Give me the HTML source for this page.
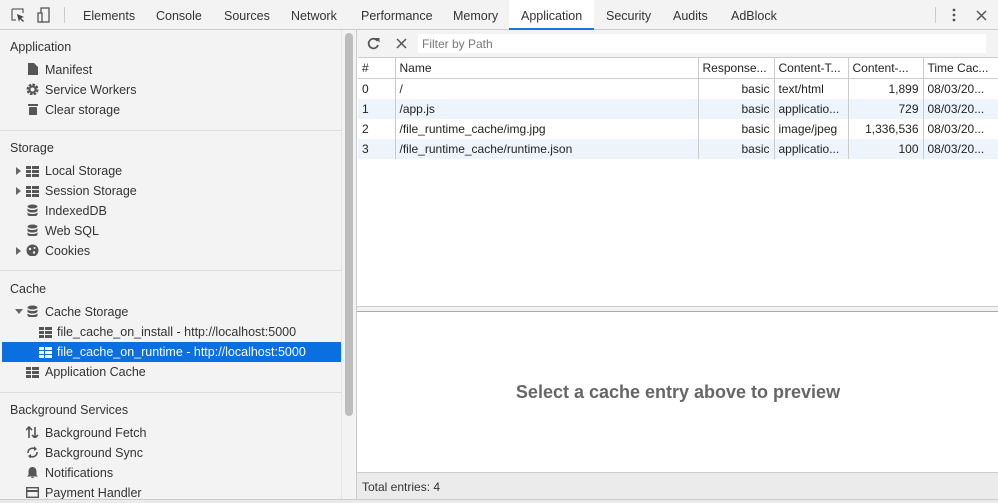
<!DOCTYPE html><html><head><style>
*{box-sizing:border-box;margin:0;padding:0}
body{width:998px;height:503px;overflow:hidden;font-family:"Liberation Sans",sans-serif;font-size:12px;color:#333;background:#f3f3f3;position:relative}
.tb{position:absolute;left:0;top:0;width:998px;height:30px;background:#f3f3f3;border-bottom:1px solid #ccc}
.tab{position:absolute;top:9px;font-size:12.5px;color:#333}
.side{position:absolute;left:0;top:30px;width:341px;height:473px;background:#f3f3f3}
.h{position:absolute;left:10px;font-size:12.5px;color:#333}
.it{position:absolute;left:45px;font-size:12.5px;color:#333;white-space:nowrap}
.sep{position:absolute;left:0;width:341px;border-top:1px solid #ddd}
.ic{position:absolute;left:26px;width:13px;height:12px}
.grid{position:absolute;width:13px;height:11px;background:
linear-gradient(#555,#555) 0 0/5px 3px no-repeat,linear-gradient(#555,#555) 6px 0/7px 3px no-repeat,
linear-gradient(#555,#555) 0 4px/5px 3px no-repeat,linear-gradient(#555,#555) 6px 4px/7px 3px no-repeat,
linear-gradient(#555,#555) 0 8px/5px 3px no-repeat,linear-gradient(#555,#555) 6px 8px/7px 3px no-repeat}
.tri{position:absolute;left:16px;width:0;height:0;border-top:4px solid transparent;border-bottom:4px solid transparent;border-left:5px solid #666}
.main{position:absolute;left:356px;top:30px;width:642px;height:473px;background:#fff;border-left:1px solid #ccc}
table{border-collapse:collapse;position:absolute;left:1px;top:27px;width:641px;table-layout:fixed}
td{height:20px;border-right:1px solid #ccc;padding:0 4px;white-space:nowrap;overflow:hidden;font-size:12px;color:#222}
.r{text-align:right}
tr.hd td{height:21px;background:#fff;border-bottom:1px solid #ccc;border-top:1px solid #ccc}
tr.alt td{background:#eef4fb}
</style></head><body>
<div class="tb">
<svg style="position:absolute;left:11px;top:8px" width="14" height="14"><path d="M1 1h11v4M1 1v11h4" stroke="#666" fill="none" stroke-width="1.3"/><path d="M6 6l7 3-3 1 3 3-1 1-3-3-1 3z" fill="#444"/></svg>
<svg style="position:absolute;left:37px;top:7px" width="14" height="16"><rect x="4" y="1" width="8" height="14" stroke="#555" fill="none" stroke-width="1.3"/><rect x="1" y="6" width="4" height="9" stroke="#555" fill="#f3f3f3" stroke-width="1.3"/></svg>
<div style="position:absolute;left:64px;top:7px;height:16px;border-left:1px solid #ccc"></div>
<span class="tab" style="left:83px">Elements</span><span class="tab" style="left:156px">Console</span><span class="tab" style="left:224px">Sources</span><span class="tab" style="left:291px">Network</span><span class="tab" style="left:361px">Performance</span><span class="tab" style="left:453px">Memory</span>
<div style="position:absolute;left:509px;top:0;width:85px;height:30px;background:#fff;border-bottom:2px solid #1a73e8"></div>
<span class="tab" style="left:521px">Application</span><span class="tab" style="left:606px">Security</span><span class="tab" style="left:673px">Audits</span><span class="tab" style="left:731px">AdBlock</span>
<div style="position:absolute;left:935px;top:7px;height:16px;border-left:1px solid #ccc"></div>
<svg style="position:absolute;left:951px;top:8px" width="6" height="15"><circle cx="3" cy="2" r="1.4" fill="#555"/><circle cx="3" cy="7" r="1.4" fill="#555"/><circle cx="3" cy="12" r="1.4" fill="#555"/></svg>
<svg style="position:absolute;left:976px;top:10px" width="11" height="11"><path d="M1 1l9 9M10 1l-9 9" stroke="#555" stroke-width="1.5"/></svg>
</div>
<div class="side">
<div class="h" style="top:10px">Application</div>
<svg class="ic" style="top:33px;left:28px" width="10" height="13"><path d="M0 0h6l4 4v9H0z" fill="#555"/></svg><div class="it" style="top:33px">Manifest</div>
<svg class="ic" style="top:53px" width="13" height="13"><circle cx="6.5" cy="6.5" r="4.5" fill="none" stroke="#555" stroke-width="3" stroke-dasharray="2.4 1.1"/><circle cx="6.5" cy="6.5" r="3" fill="none" stroke="#555" stroke-width="2"/></svg><div class="it" style="top:53px">Service Workers</div>
<svg class="ic" style="top:73px;left:28px" width="10" height="13"><rect x="0" y="1" width="10" height="2" fill="#555"/><rect x="1" y="4" width="8" height="9" rx="1" fill="#555"/></svg><div class="it" style="top:73px">Clear storage</div>
<div class="sep" style="top:100px"></div>
<div class="h" style="top:111px">Storage</div>
<div class="tri" style="top:137px"></div><div class="grid" style="left:26px;top:136px"></div><div class="it" style="top:134px">Local Storage</div>
<div class="tri" style="top:157px"></div><div class="grid" style="left:26px;top:156px"></div><div class="it" style="top:154px">Session Storage</div>
<svg class="ic" style="top:174px;left:27px" width="11" height="13"><ellipse cx="5.5" cy="2.5" rx="5" ry="2" fill="#555"/><path d="M.5 4v2.5c0 1 2 2 5 2s5-1 5-2V4c0 1-2 2-5 2s-5-1-5-2zM.5 8v2.5c0 1 2 2 5 2s5-1 5-2V8c0 1-2 2-5 2s-5-1-5-2z" fill="#555"/></svg><div class="it" style="top:174px">IndexedDB</div>
<svg class="ic" style="top:194px;left:27px" width="11" height="13"><ellipse cx="5.5" cy="2.5" rx="5" ry="2" fill="#555"/><path d="M.5 4v2.5c0 1 2 2 5 2s5-1 5-2V4c0 1-2 2-5 2s-5-1-5-2zM.5 8v2.5c0 1 2 2 5 2s5-1 5-2V8c0 1-2 2-5 2s-5-1-5-2z" fill="#555"/></svg><div class="it" style="top:194px">Web SQL</div>
<div class="tri" style="top:217px"></div><svg class="ic" style="top:214px" width="13" height="13"><circle cx="6.5" cy="6.5" r="6" fill="#555"/><circle cx="4" cy="5" r="1.2" fill="#f3f3f3"/><circle cx="8" cy="8.5" r="1.2" fill="#f3f3f3"/><circle cx="8.5" cy="4" r="1" fill="#f3f3f3"/></svg><div class="it" style="top:214px">Cookies</div>
<div class="sep" style="top:240px"></div>
<div class="h" style="top:252px">Cache</div>
<div style="position:absolute;left:15px;top:279px;border-left:4px solid transparent;border-right:4px solid transparent;border-top:5px solid #666"></div>
<svg class="ic" style="top:275px;left:27px" width="11" height="13"><ellipse cx="5.5" cy="2.5" rx="5" ry="2" fill="#555"/><path d="M.5 4v2.5c0 1 2 2 5 2s5-1 5-2V4c0 1-2 2-5 2s-5-1-5-2zM.5 8v2.5c0 1 2 2 5 2s5-1 5-2V8c0 1-2 2-5 2s-5-1-5-2z" fill="#555"/></svg><div class="it" style="top:275px">Cache Storage</div>
<div class="grid" style="left:39px;top:297px"></div><div class="it" style="left:57px;top:295px">file_cache_on_install - http://localhost:5000</div>
<div style="position:absolute;left:2px;top:312px;width:339px;height:20px;background:#0a6fe0"></div>
<div class="grid" style="left:39px;top:317px;filter:invert(1) brightness(3)"></div><div class="it" style="left:57px;top:315px;color:#fff">file_cache_on_runtime - http://localhost:5000</div>
<div class="grid" style="left:26px;top:337px"></div><div class="it" style="top:335px">Application Cache</div>
<div class="sep" style="top:362px"></div>
<div class="h" style="top:373px">Background Services</div>
<svg class="ic" style="top:396px" width="13" height="13"><path d="M3 12V2M0 4l3-3 3 3M9 1v10M6 9l3 3 3-3" stroke="#555" stroke-width="1.6" fill="none"/></svg><div class="it" style="top:396px">Background Fetch</div>
<svg class="ic" style="top:416px" width="13" height="13"><path d="M2 7a4.5 4.5 0 0 1 7-4M11 6a4.5 4.5 0 0 1-7 4" stroke="#555" stroke-width="1.6" fill="none"/><path d="M8 0l3 3-3 2zM5 13l-3-3 3-2z" fill="#555"/></svg><div class="it" style="top:416px">Background Sync</div>
<svg class="ic" style="top:436px" width="13" height="13"><path d="M6.5 1c-2.5 0-4 2-4 4.5V9L1 10.5h11L10.5 9V5.5C10.5 3 9 1 6.5 1z" fill="#555"/><circle cx="6.5" cy="12" r="1.3" fill="#555"/></svg><div class="it" style="top:436px">Notifications</div>
<svg class="ic" style="top:457px" width="13" height="11"><rect x=".7" y=".7" width="11.6" height="9.6" stroke="#555" fill="none" stroke-width="1.4"/><rect x="1" y="3" width="11" height="2" fill="#555"/></svg><div class="it" style="top:456px">Payment Handler</div>
</div>
<div style="position:absolute;left:341px;top:30px;width:15px;height:473px;background:#f3f3f3;border-left:1px solid #e4e4e4"></div>
<div style="position:absolute;left:345px;top:33px;width:8px;height:383px;background:#bdbdbd;border-radius:4px"></div>
<div class="main">
<div style="position:absolute;left:0;top:0;width:642px;height:27px;background:#f3f3f3"></div>
<svg style="position:absolute;left:10px;top:7px" width="13" height="13"><path d="M10.5 4A4.8 4.8 0 1 0 11 8" stroke="#555" stroke-width="1.7" fill="none"/><path d="M8 1h4.5v4.5z" fill="#555"/></svg>
<svg style="position:absolute;left:39px;top:8px" width="11" height="11"><path d="M1 1l9 9M10 1l-9 9" stroke="#555" stroke-width="1.5"/></svg>
<div style="position:absolute;left:61px;top:4px;width:568px;height:19px;background:#fff;color:#777;padding:3px 4px;font-size:12px">Filter by Path</div>
<table>
<colgroup><col style="width:37px"><col style="width:303px"><col style="width:76px"><col style="width:74px"><col style="width:75px"><col style="width:76px"></colgroup>
<tr class="hd"><td>#</td><td>Name</td><td>Response...</td><td>Content-T...</td><td>Content-...</td><td>Time Cac...</td></tr>
<tr><td>0</td><td>/</td><td class="r">basic</td><td>text/html</td><td class="r">1,899</td><td>08/03/20...</td></tr>
<tr class="alt"><td>1</td><td>/app.js</td><td class="r">basic</td><td>applicatio...</td><td class="r">729</td><td>08/03/20...</td></tr>
<tr><td>2</td><td>/file_runtime_cache/img.jpg</td><td class="r">basic</td><td>image/jpeg</td><td class="r">1,336,536</td><td>08/03/20...</td></tr>
<tr class="alt"><td>3</td><td>/file_runtime_cache/runtime.json</td><td class="r">basic</td><td>applicatio...</td><td class="r">100</td><td>08/03/20...</td></tr>
</table>
<div style="position:absolute;left:0;top:276px;width:642px;height:6px;background:#f3f3f3;border-top:1px solid #ccc;border-bottom:1px solid #aaa"></div>
<div style="position:absolute;left:0;top:352px;width:642px;text-align:center;font-size:18px;font-weight:bold;color:#666">Select a cache entry above to preview</div>
<div style="position:absolute;left:0;top:442px;width:642px;height:27px;background:#ebebeb;border-top:1px solid #ccc;padding:7px 5px;font-size:12px;color:#333">Total entries: 4</div>
</div>
<div style="position:absolute;left:0;top:499px;width:998px;height:4px;background:#ebebeb;border-top:1px solid #ccc"></div>
</body></html>
